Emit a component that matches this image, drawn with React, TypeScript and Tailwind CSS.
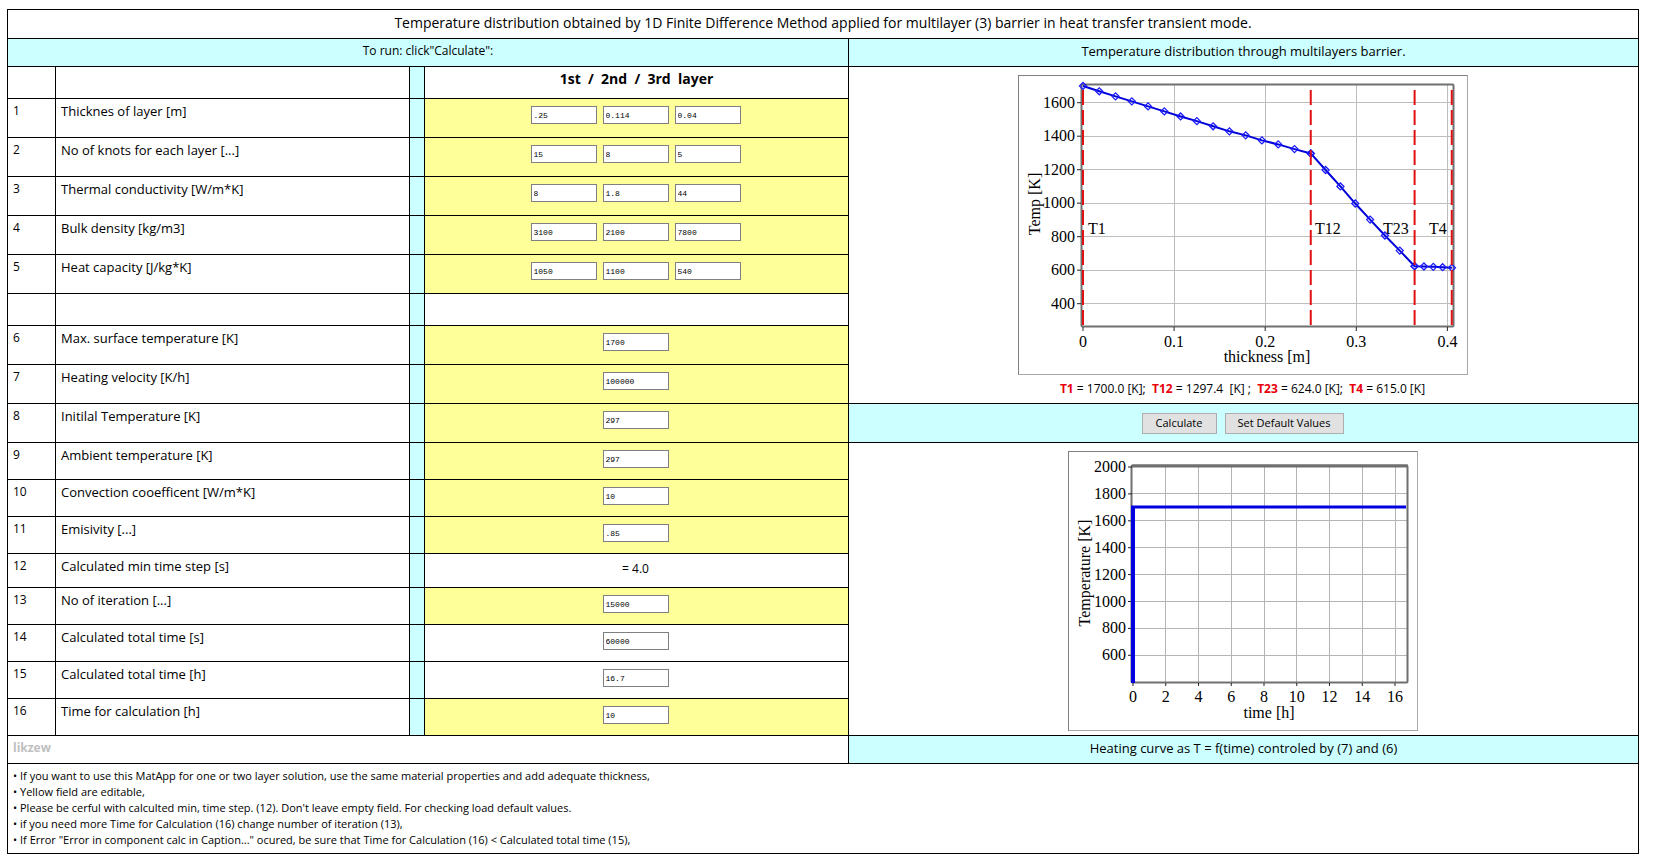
import React from 'react';

interface Row {
  no: string;
  label: string;
  height: string;
  values: string[];
  editable: boolean;
}

const layerRows: Row[] = [
  { no: '1', label: 'Thicknes of layer [m]', height: 'h-[39px]', values: ['.25', '0.114', '0.04'], editable: true },
  { no: '2', label: 'No of knots for each layer [...]', height: 'h-[39px]', values: ['15', '8', '5'], editable: true },
  { no: '3', label: 'Thermal conductivity [W/m*K]', height: 'h-[39px]', values: ['8', '1.8', '44'], editable: true },
  { no: '4', label: 'Bulk density [kg/m3]', height: 'h-[39px]', values: ['3100', '2100', '7800'], editable: true },
  { no: '5', label: 'Heat capacity [J/kg*K]', height: 'h-[39px]', values: ['1050', '1100', '540'], editable: true },
];

const heatRows: Row[] = [
  { no: '6', label: 'Max. surface temperature [K]', height: 'h-[39px]', values: ['1700'], editable: true },
  { no: '7', label: 'Heating velocity [K/h]', height: 'h-[39px]', values: ['100000'], editable: true },
  { no: '8', label: 'Initilal Temperature [K]', height: 'h-[39px]', values: ['297'], editable: true },
  { no: '9', label: 'Ambient temperature [K]', height: 'h-[37px]', values: ['297'], editable: true },
  { no: '10', label: 'Convection cooefficent [W/m*K]', height: 'h-[37px]', values: ['10'], editable: true },
  { no: '11', label: 'Emisivity [...]', height: 'h-[37px]', values: ['.85'], editable: true },
  { no: '12', label: 'Calculated min time step [s]', height: 'h-[34px]', values: [], editable: false },
  { no: '13', label: 'No of iteration [...]', height: 'h-[37px]', values: ['15000'], editable: true },
  { no: '14', label: 'Calculated total time [s]', height: 'h-[37px]', values: ['60000'], editable: false },
  { no: '15', label: 'Calculated total time [h]', height: 'h-[37px]', values: ['16.7'], editable: false },
  { no: '16', label: 'Time for calculation [h]', height: 'h-[37px]', values: ['10'], editable: true },
];

const notes = [
  'If you want to use this MatApp for one or two layer solution, use the same material properties and add adequate thickness,',
  'Yellow field are editable,',
  "Please be cerful with calculted min, time step. (12). Don't leave empty field. For checking load default values.",
  'if you need more Time for Calculation (16) change number of iteration (13),',
  'If Error "Error in component calc in Caption..." ocured, be sure that Time for Calculation (16) < Calculated total time (15),',
];

const layers = [
  { from: 0, to: 0.25, temps: [1700, 1668, 1638, 1608, 1578, 1548, 1518, 1490, 1459, 1429, 1405, 1375, 1351, 1323, 1297] },
  { from: 0.25, to: 0.364, temps: [1297, 1198, 1100, 998, 902, 807, 717, 624] },
  { from: 0.364, to: 0.405, temps: [624, 622, 620, 618, 615] },
];

const DistributionChart = () => {
  const px = (m: number) => 65 + m * 911;
  const py = (t: number) => 27.7 + (1600 - t) * 0.1675;
  const points = layers.flatMap((l) =>
    l.temps.map((t, i) => [px(l.from + ((l.to - l.from) * i) / (l.temps.length - 1)), py(t)])
  );

  return (
    <svg
      width="450"
      height="300"
      className="border border-t-[#808080] border-l-[#808080] border-r-[#a8a8a8] border-b-[#a8a8a8] font-['Liberation_Serif',serif] text-base"
      viewBox="1 1 448 298"
      role="img"
      aria-label="Temperature against thickness"
    >
      <g stroke="#bdbdbd" shapeRendering="crispEdges">
        {[0.1, 0.2, 0.3, 0.4].map((m) => (
          <line key={m} x1={px(m)} x2={px(m)} y1="10" y2="251" />
        ))}
        {[400, 600, 800, 1000, 1200, 1400, 1600].map((t) => (
          <line key={t} x1="64" x2="435" y1={py(t)} y2={py(t)} />
        ))}
      </g>
      <rect x="63.5" y="9.5" width="372" height="242" rx="1" fill="none" stroke="#707070" strokeWidth="2" />
      {[400, 600, 800, 1000, 1200, 1400, 1600].map((t) => (
        <g key={t}>
          <line x1="59" x2="63" y1={py(t)} y2={py(t)} stroke="#222" />
          <text x="57" y={py(t) + 5} textAnchor="end">{t}</text>
        </g>
      ))}
      {[0, 0.1, 0.2, 0.3, 0.4].map((m) => (
        <g key={m}>
          <line x1={px(m)} x2={px(m)} y1="252" y2="256" stroke="#222" />
          <text x={px(m)} y="272" textAnchor="middle">{m}</text>
        </g>
      ))}
      <text x="249" y="287" textAnchor="middle">thickness [m]</text>
      <text transform="translate(22 129) rotate(-90)" textAnchor="middle">Temp [K]</text>
      <text x="70" y="159">T1</text>
      <text x="297" y="159">T12</text>
      <text x="365" y="159">T23</text>
      <text x="411" y="159">T4</text>
      <polyline points={points.map((p) => p.join(',')).join(' ')} fill="none" stroke="#0000d8" strokeWidth="2" />
      <g fill="none" stroke="#1a1aff" strokeWidth="1.3">
        {points.map(([x, y], i) => (
          <path key={i} d={`M${x - 3.5} ${y}l3.5 -3.5l3.5 3.5l-3.5 3.5z`} />
        ))}
      </g>
      <g stroke="#e01010" strokeWidth="2" strokeDasharray="15 5">
        {[0, 0.25, 0.364, 0.4048].map((m) => (
          <line key={m} x1={px(m)} x2={px(m)} y1="15" y2="250" />
        ))}
      </g>
    </svg>
  );
};

const HeatingChart = () => {
  const px = (h: number) => 65 + h * 16.375;
  const py = (t: number) => 16 + (2000 - t) * 0.1345;

  return (
    <svg
      width="350"
      height="280"
      className="border border-t-[#808080] border-l-[#808080] border-r-[#a8a8a8] border-b-[#a8a8a8] font-['Liberation_Serif',serif] text-base"
      viewBox="1 1 348 278"
      role="img"
      aria-label="Surface temperature against time"
    >
      <g stroke="#b4b4b4" shapeRendering="crispEdges">
        {[2, 4, 6, 8, 10, 12, 14, 16].map((h) => (
          <line key={h} x1={px(h)} x2={px(h)} y1="15" y2="232" />
        ))}
        {[600, 800, 1000, 1200, 1400, 1600, 1800].map((t) => (
          <line key={t} x1="64" x2="340" y1={py(t)} y2={py(t)} />
        ))}
      </g>
      <rect x="63.5" y="14.5" width="276" height="217" rx="1" fill="none" stroke="#707070" strokeWidth="2" />
      <line x1="64" x2="340" y1="15" y2="15" stroke="#707070" strokeWidth="3" />
      {[600, 800, 1000, 1200, 1400, 1600, 1800, 2000].map((t) => (
        <g key={t}>
          <line x1="60" x2="64" y1={py(t)} y2={py(t)} stroke="#222" />
          <text x="58" y={py(t) + 5} textAnchor="end">{t}</text>
        </g>
      ))}
      {[0, 2, 4, 6, 8, 10, 12, 14, 16].map((h) => (
        <g key={h}>
          <line x1={px(h)} x2={px(h)} y1="232" y2="235" stroke="#222" />
          <text x={px(h)} y="251" textAnchor="middle">{h}</text>
        </g>
      ))}
      <text x="201" y="267" textAnchor="middle">time [h]</text>
      <text transform="translate(22 122) rotate(-90)" textAnchor="middle">Temperature [K]</text>
      <path d="M65 232V56" fill="none" stroke="#0000e0" strokeWidth="4" />
      <path d="M63 56H338" fill="none" stroke="#0000e0" strokeWidth="3" />
    </svg>
  );
};

const RowCells: React.FC<{ row: Row }> = ({ row }) => (
  <>
    <td className="border border-black px-[5px] pt-[3px] align-top text-xs leading-[18px]">{row.no}</td>
    <td className="border border-black px-[5px] pt-[3px] align-top text-[13px] leading-[18px]">
      <label htmlFor={`field-${row.no}-0`}>{row.label}</label>
    </td>
    <td className="border border-black bg-[#ccffff]" />
    <td className={`border border-black pt-[7px] pr-0.5 align-top ${row.editable ? 'bg-[#ffff99]' : 'bg-white'}`}>
      {row.values.length > 0 ? (
        <div className="flex justify-center gap-1.5">
          {row.values.map((value, i) => (
            <input
              key={i}
              id={`field-${row.no}-${i}`}
              aria-label={row.values.length > 1 ? `${row.label}, layer ${i + 1}` : undefined}
              defaultValue={value}
              readOnly={!row.editable}
              className="h-[18px] w-[66px] border border-[#808080] bg-white px-[2px] font-['Liberation_Mono',monospace] text-[8px] leading-4"
            />
          ))}
        </div>
      ) : (
        <output id={`field-${row.no}-0`} className="block text-center text-xs leading-4">= 4.0</output>
      )}
    </td>
  </>
);

export default function App() {
  return (
    <form
      className="pt-[9px] pr-[14px] pb-2 pl-[7px] font-['Open_Sans',sans-serif] text-black"
      onSubmit={(e) => e.preventDefault()}
    >
      <table className="w-full table-fixed border-collapse border border-black bg-white">
        <colgroup>
          <col className="w-[48px]" />
          <col className="w-[354px]" />
          <col className="w-[15px]" />
          <col className="w-[424px]" />
          <col />
        </colgroup>
        <tbody>
          <tr className="h-[29px]">
            <td colSpan={5} className="border border-black pt-[3px] text-center align-top text-sm leading-5">
              Temperature distribution obtained by 1D Finite Difference Method applied for multilayer (3) barrier in heat transfer transient mode.
            </td>
          </tr>
          <tr className="h-[28px] bg-[#ccffff]">
            <td colSpan={4} className="border border-black pt-[3px] text-center align-top text-xs leading-[18px]">To run: click"Calculate":</td>
            <td className="border border-black pt-[3px] text-center align-top text-[13px] leading-[18px]">Temperature distribution through multilayers barrier.</td>
          </tr>
          <tr className="h-[32px]">
            <td className="border border-black" />
            <td className="border border-black" />
            <td className="border border-black bg-[#ccffff]" />
            <th scope="col" className="border border-black pt-[3px] text-center align-top text-sm leading-[18px] font-bold whitespace-pre">
              {'1st  /  2nd  /  3rd  layer'}
            </th>
            <td rowSpan={9} className="border border-black pt-2 pr-0.5 align-top">
              <div className="flex flex-col items-center gap-1.5">
                <DistributionChart />
                <p className="text-xs leading-4 whitespace-pre">
                  <b className="text-[#e8000d]">T1</b> = 1700.0 [K];  <b className="text-[#e8000d]">T12</b> = 1297.4  [K] ;  <b className="text-[#e8000d]">T23</b> = 624.0 [K];  <b className="text-[#e8000d]">T4</b> = 615.0 [K]
                </p>
              </div>
            </td>
          </tr>
          {layerRows.map((row) => (
            <tr key={row.no} className={row.height}>
              <RowCells row={row} />
            </tr>
          ))}
          <tr className="h-[32px]">
            <td className="border border-black" />
            <td className="border border-black" />
            <td className="border border-black bg-[#ccffff]" />
            <td className="border border-black" />
          </tr>
          {heatRows.map((row) => (
            <tr key={row.no} className={row.height}>
              <RowCells row={row} />
              {row.no === '8' && (
                <td className="border border-black bg-[#ccffff] pr-0.5">
                  <div className="flex justify-center gap-2 text-[11px] leading-4">
                    <button type="submit" className="h-[21px] w-[75px] border border-[#adadad] bg-[#e1e1e1]">Calculate</button>
                    <button type="reset" className="h-[21px] w-[119px] border border-[#adadad] bg-[#e1e1e1]">Set Default Values</button>
                  </div>
                </td>
              )}
              {row.no === '9' && (
                <td rowSpan={8} className="border border-black pt-2 pr-0.5 align-top">
                  <div className="flex justify-center">
                    <HeatingChart />
                  </div>
                </td>
              )}
            </tr>
          ))}
          <tr className="h-[28px]">
            <td colSpan={4} className="border border-black px-[5px] pt-[3px] align-top text-xs leading-[18px] font-bold text-[#c0c0c0]">likzew</td>
            <td className="border border-black bg-[#ccffff] pt-[3px] text-center align-top text-[13px] leading-[18px]">Heating curve as T = f(time) controled by (7) and (6)</td>
          </tr>
          <tr className="h-[90px]">
            <td colSpan={5} className="border border-black px-[5px] pt-1 align-top">
              <ul className="text-[11px] leading-4">
                {notes.map((note) => (
                  <li key={note}>• {note}</li>
                ))}
              </ul>
            </td>
          </tr>
        </tbody>
      </table>
    </form>
  );
}
